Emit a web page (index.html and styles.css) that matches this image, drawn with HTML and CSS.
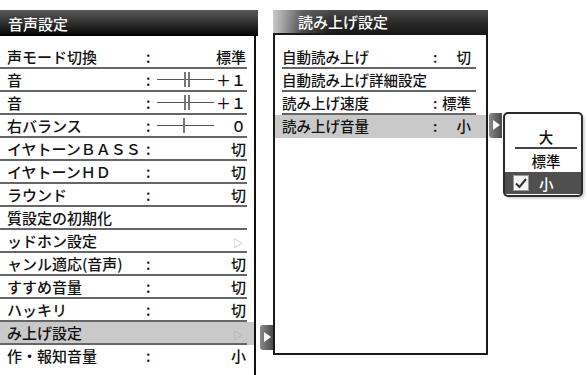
FILE: index.html
```html
<!DOCTYPE html>
<html lang="ja">
<head>
<meta charset="utf-8">
<link rel="stylesheet" href="styles.css">
</head>
<body>
<div class="screen">
  <section class="panel left">
    <div class="head">音声設定</div>
    <div class="body">
      <div class="row"><div class="cell"><span class="lab">声モード切換</span><span class="col">:</span><span class="val">標準</span></div></div>
      <div class="row"><div class="cell"><span class="lab">音</span><span class="col">:</span><span class="val slider"><span class="track"><span class="knob dbl"></span></span><span>＋１</span></span></div></div>
      <div class="row"><div class="cell"><span class="lab">音</span><span class="col">:</span><span class="val slider"><span class="track"><span class="knob dbl"></span></span><span>＋１</span></span></div></div>
      <div class="row"><div class="cell"><span class="lab">右バランス</span><span class="col">:</span><span class="val slider"><span class="track"><span class="knob mid"></span></span><span>０</span></span></div></div>
      <div class="row"><div class="cell"><span class="lab">イヤトーンＢＡＳＳ</span><span class="col">:</span><span class="val">切</span></div></div>
      <div class="row"><div class="cell"><span class="lab">イヤトーンＨＤ</span><span class="col">:</span><span class="val">切</span></div></div>
      <div class="row"><div class="cell"><span class="lab">ラウンド</span><span class="col">:</span><span class="val">切</span></div></div>
      <div class="row"><div class="cell"><span class="lab">質設定の初期化</span><span class="col"></span><span class="val"></span></div></div>
      <div class="row"><div class="cell"><span class="lab">ッドホン設定</span><span class="col"></span><span class="val"><span class="chev">▷</span></span></div></div>
      <div class="row"><div class="cell"><span class="lab">ャンル適応(音声)</span><span class="col">:</span><span class="val">切</span></div></div>
      <div class="row"><div class="cell"><span class="lab">すすめ音量</span><span class="col">:</span><span class="val">切</span></div></div>
      <div class="row"><div class="cell"><span class="lab">ハッキリ</span><span class="col">:</span><span class="val">切</span></div></div>
      <div class="row sel"><div class="cell"><span class="lab">み上げ設定</span><span class="col"></span><span class="val"><span class="chev">▷</span></span></div></div>
      <div class="row last"><div class="cell"><span class="lab">作・報知音量</span><span class="col">:</span><span class="val">小</span></div></div>
    </div>
    <div class="tab tab-left"></div>
  </section>

  <section class="panel right">
    <div class="head">読み上げ設定</div>
    <div class="body">
      <div class="row"><div class="cell"><span class="lab">自動読み上げ</span><span class="col">:</span><span class="val">切</span></div></div>
      <div class="row"><div class="cell"><span class="lab">自動読み上げ詳細設定</span><span class="col"></span><span class="val"></span></div></div>
      <div class="row"><div class="cell"><span class="lab">読み上げ速度</span><span class="col">:</span><span class="val">標準</span></div></div>
      <div class="row sel last"><div class="cell"><span class="lab">読み上げ音量</span><span class="col">:</span><span class="val">小</span></div></div>
    </div>
    <div class="tab tab-right"></div>
  </section>

  <div class="popup">
    <div class="opt first">大</div>
    <div class="opt">標準</div>
    <div class="opt on">
      <svg class="check" width="16" height="16" viewBox="0 0 16 16"><rect x="0.5" y="0.5" width="15" height="15" fill="#f2f2f2" stroke="#999"/><path d="M3 8.5 L6.5 12 L13 4" fill="none" stroke="#333" stroke-width="2"/></svg>
      <span>小</span>
    </div>
  </div>
</div>
</body>
</html>
```

FILE: styles.css
```css
html, body {
  margin: 0;
  padding: 0;
  background: #fff;
}
body {
  font-family: "Noto Sans CJK JP", "Noto Sans", sans-serif;
  color: #111;
  font-size: 15px;
  font-weight: 500;
}
.screen {
  position: relative;
  width: 587px;
  height: 375px;
  overflow: hidden;
  display: flex;
  align-items: flex-start;
  padding-top: 10px;
  box-sizing: border-box;
}
.panel {
  position: relative;
}
.head {
  color: #fff;
  line-height: 1;
  display: flex;
  align-items: center;
}
.left {
  width: 258px;
}
.left .head {
  height: 26px;
  padding-left: 8px;
  background: linear-gradient(to bottom, #5a5a5a 0, #333 45%, #1a1a1a 75%, #000 100%);
}
.left .body {
  width: 254px;
  border-right: 2px solid #111;
  padding-top: 10px;
  height: 330px;
}
.row {
  height: 23px;
}
.cell {
  height: 21px;
  border-bottom: 2px solid #666;
  display: flex;
  align-items: center;
  white-space: nowrap;
}
.row.last .cell {
  border-bottom-color: transparent;
}
.row.sel {
  background: #c9c9c9;
}
.left .cell {
  margin-right: 7px;
  padding-left: 7px;
}
.left .lab {
  width: 139px;
}
.col {
  width: 8px;
  text-align: left;
}
.left .val {
  width: 92px;
  text-align: right;
}
.val.slider {
  display: flex;
  align-items: center;
  justify-content: space-between;
}
.track {
  position: relative;
  width: 57px;
  height: 1px;
  background: #555;
  margin-left: 3px;
}
.knob {
  position: absolute;
  top: -7px;
  height: 15px;
  width: 2px;
  background: #777;
}
.knob.dbl {
  left: 27px;
  width: 6px;
  background: linear-gradient(to right, #777 0, #777 2px, transparent 2px, transparent 4px, #777 4px);
}
.knob.mid {
  left: 26px;
}
.chev {
  color: #aaa;
  font-size: 10px;
  margin-right: 3px;
}
.right {
  margin-left: 15px;
  width: 215px;
}
.right .head {
  height: 23px;
  padding-left: 25px;
  background:
    linear-gradient(to right, rgba(210,210,210,0.95) 0, rgba(120,120,120,0.5) 30px, rgba(60,60,60,0) 60px),
    linear-gradient(to bottom, #4a4a4a 0, #2a2a2a 55%, #1a1a1a 100%);
}
.right .body {
  border: 2px solid #1a1a1a;
  padding-top: 11px;
  box-sizing: content-box;
  width: 211px;
  height: 307px;
}
.right .cell {
  margin: 0 10px 0 7px;
  font-size: 14.5px;
}
.right .lab {
  width: 151px;
}
.right .val {
  width: 30px;
  text-align: right;
}
.tab {
  position: absolute;
  width: 13px;
  height: 25px;
  border-radius: 3px 0 0 3px;
  background: linear-gradient(to right, #8a8a8a, #4a4a4a);
}
.tab::after {
  content: "";
  position: absolute;
  left: 4px;
  top: 7px;
  border-left: 7px solid #fff;
  border-top: 5.5px solid transparent;
  border-bottom: 5.5px solid transparent;
}
.tab-left {
  left: 260px;
  top: 315px;
}
.tab-right {
  left: 216px;
  top: 103px;
}
.popup {
  position: absolute;
  left: 503px;
  top: 112px;
  width: 76px;
  border: 2px solid #2a2a2a;
  border-radius: 5px;
  background: #fff;
  padding-top: 11px;
  box-sizing: content-box;
  height: 70px;
  box-shadow: 2px 2px 2px rgba(0,0,0,0.15);
}
.opt {
  height: 23px;
  display: flex;
  align-items: center;
  justify-content: center;
  margin: 0 4px 0 10px;
  font-size: 14.5px;
}
.opt.first {
  border-bottom: 2px solid #444;
  height: 22px;
}
.opt.on {
  margin: 0;
  background: #4f4f4f;
  color: #fff;
  justify-content: flex-start;
  padding-left: 8px;
  gap: 10px;
  height: 22px;
}
.check {
  display: block;
}
```
